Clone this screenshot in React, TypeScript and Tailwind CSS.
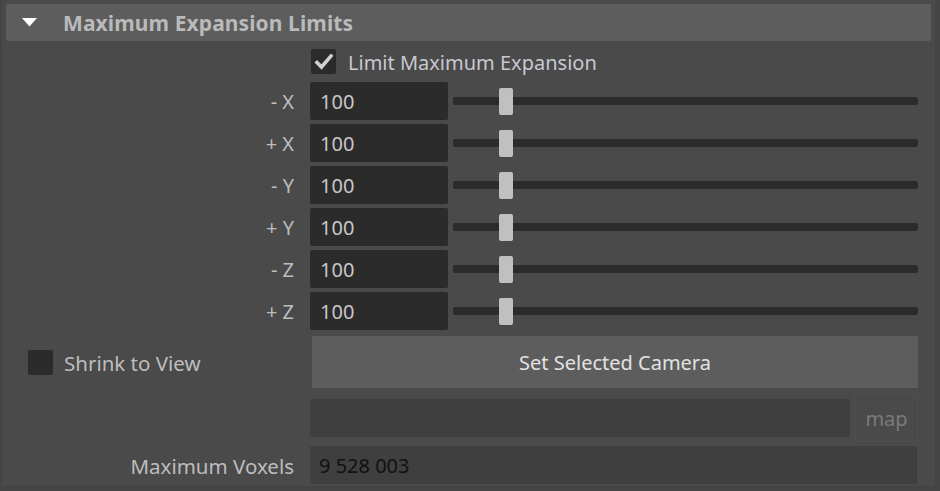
import React from "react";

const font = { fontFamily: '"Noto Sans", "Open Sans", "Liberation Sans", sans-serif' };

const axes = ["- X", "+ X", "- Y", "+ Y", "- Z", "+ Z"];

function Check({ on }: { on?: boolean }) {
  return (
    <div className="w-[25px] h-[25px] rounded-[2px] bg-[#2b2b2b] flex items-center justify-center shrink-0">
      {on && (
        <svg width="20" height="18" viewBox="0 0 20 18">
          <path d="M3 9.5 L7.5 14 L17 3" fill="none" stroke="#d0d0d0" strokeWidth="3.6" strokeLinecap="square" />
        </svg>
      )}
    </div>
  );
}

function AxisRow({ label }: { label: string }) {
  return (
    <div className="flex items-center h-[38px]">
      <div className="w-[289px] text-right text-[20px] text-[#bdbdbd] pr-[1px] pt-[2px]">{label}</div>
      <div className="ml-[15px] w-[138px] h-[38px] rounded-[2px] bg-[#2b2b2b] flex items-center pl-[10px] pt-[2px] text-[20px] text-[#c8c8c8]">
        100
      </div>
      <div className="relative ml-[5px] flex-1 mr-[13px] h-[27px] flex items-center">
        <div className="w-full h-[8px] rounded-[2px] bg-[#2b2b2b]" />
        <div className="absolute left-[46px] top-0 w-[14px] h-[27px] rounded-[2px] bg-[#c0c0c0]" />
      </div>
    </div>
  );
}

export default function App() {
  return (
    <div className="w-[940px] h-[491px] bg-[#444444] overflow-hidden" style={font}>
      <div className="ml-[2px] mr-[5px] h-[486px] bg-[#4a4a4a] px-[4px] pt-[4px] flex flex-col">
        <div className="h-[37px] rounded-[2px] bg-[#5d5d5d] flex items-center">
          <svg className="ml-[16px]" width="15" height="9" viewBox="0 0 15 9">
            <path d="M0 0 H15 L7.5 8.5 Z" fill="#ffffff" />
          </svg>
          <span className="ml-[26px] pt-[3px] text-[21px] font-bold text-[#bababa] tracking-[0.1px]">Maximum Expansion Limits</span>
        </div>

        <div className="mt-[8px] flex items-center h-[25px] pl-[305px]">
          <Check on />
          <span className="ml-[12px] pt-[2px] text-[20px] text-[#c8c8d0]">Limit Maximum Expansion</span>
        </div>

        <div className="mt-[8px] flex flex-col gap-[4px]">
          {axes.map((a) => (
            <AxisRow key={a} label={a} />
          ))}
        </div>

        <div className="mt-[6px] flex items-center h-[52px]">
          <div className="w-[306px] flex items-center pl-[22px]">
            <Check />
            <span className="ml-[11px] pt-[2px] text-[20.5px] text-[#bdbdbd]">Shrink to View</span>
          </div>
          <div className="w-[606px] h-[52px] bg-[#5d5d5d] flex items-center justify-center pt-[2px] text-[20px] text-[#e2e2e2]">
            Set Selected Camera
          </div>
        </div>

        <div className="mt-[5px] flex items-center h-[49px] pl-[304px]">
          <div className="w-[540px] h-[38px] rounded-[2px] bg-[#3f3f3f]" />
          <div className="ml-[5px] w-[63px] h-[49px] border border-[#4f4f4f] bg-[#4a4a4a] flex items-center justify-center pt-[2px] text-[20px] text-[#7a7a7a]">
            map
          </div>
        </div>

        <div className="mt-[4px] flex items-center h-[38px]">
          <div className="w-[289px] text-right text-[20.5px] text-[#bdbdbd] pr-[1px] pt-[2px]">Maximum Voxels</div>
          <div className="ml-[15px] w-[607px] h-[38px] rounded-[2px] bg-[#3f3f3f] flex items-center pl-[9px] pt-[2px] text-[20px] text-[#111111]">
            9 528 003
          </div>
        </div>
      </div>
    </div>
  );
}
